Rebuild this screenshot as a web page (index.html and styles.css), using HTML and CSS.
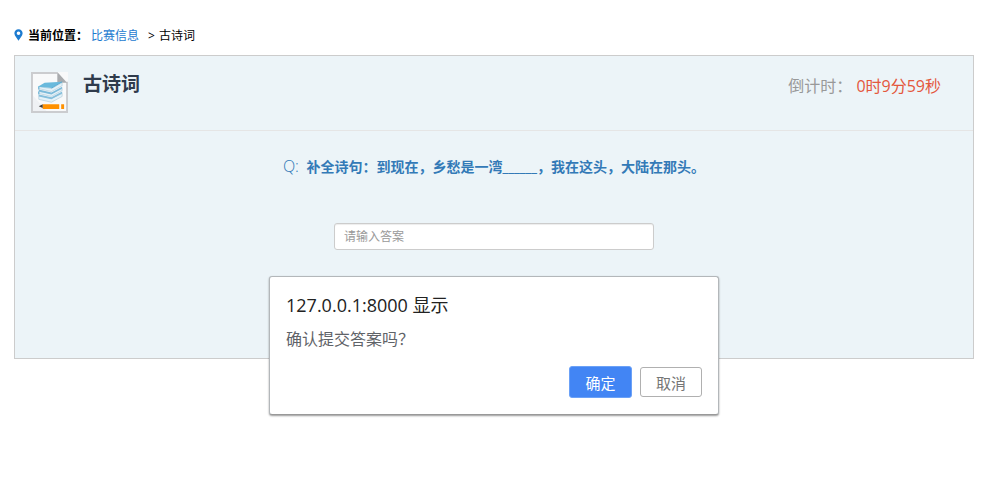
FILE: index.html
```html
<!DOCTYPE html>
<html lang="zh-CN">
  <head>
    <meta charset="UTF-8" />
    <meta name="viewport" content="width=device-width, initial-scale=1" />
    <title>古诗词</title>
    <link rel="stylesheet" href="styles.css">
  </head>
  <body>
    <div class="page">
      <!-- 当前位置 -->
      <nav class="location">
        <svg class="location-icon" viewBox="0 0 10 14" aria-hidden="true">
          <path fill="#1c7bd0" fill-rule="evenodd" d="M5 0.500C2.300 0.500 0.400 2.500 0.400 5c0 3 3.200 5.400 4.600 8.500C6.400 10.400 9.600 8 9.600 5 9.600 2.500 7.700 0.500 5 0.500zM5 3a2 2 0 1 1 0 4 2 2 0 0 1 0-4z" />
        </svg>
        <strong>当前位置：</strong>
        <a href="#">比赛信息</a>
        <span class="location-sep">&gt;</span>
        <span>古诗词</span>
      </nav>

      <main class="panel">
        <header class="panel-header">
          <svg class="panel-icon" viewBox="0 0 38 42" aria-hidden="true">
            <path fill="#f8f9fa" d="M0 0h38v42H0z" />
            <path fill="#eff1f4" d="M2 40V24l14 16z" />
            <path fill="none" stroke="#cbcccf" stroke-width="2" d="M27 1H1v40h36V10" />
            <path fill="#a9abae" d="M27 0l10 11H27z" />
            <!-- 书本 -->
            <path fill="#e4f2f9" stroke="#a9c6d6" stroke-width="0.600" d="M8 24l13 3 11-5v3l-11 6-13-3z" />
            <path fill="#86bfdc" d="M8 23l13 3 11-6v2l-11 6-13-3z" />
            <path fill="#e4f2f9" stroke="#a9c6d6" stroke-width="0.600" d="M8 20l13 2 11-5v2l-11 6-13-3z" />
            <path fill="#7bbada" d="M8 18l13 3 11-6v2l-11 6-13-3z" />
            <path fill="#e4f2f9" stroke="#a9c6d6" stroke-width="0.600" d="M8 15l13 2 11-6v3l-11 6-13-3z" />
            <path fill="#69b9dc" d="M7 15l7-4 18-1-11 6.500z" />
            <path fill="none" stroke="#4ba5d0" stroke-width="0.900" d="M8 15v3M8 20v3M21 16.500l11-6.500" />
            <!-- 铅笔 -->
            <path fill="#ff9100" d="M12 33h17v5H12zM31 33h3v5h-3z" />
            <path fill="#3d3a35" d="M8 35l4-2v4z" />
          </svg>
          <h1>古诗词</h1>
          <p class="countdown">倒计时： <span>0时9分59秒</span></p>
        </header>

        <form class="question">
          <label for="answer">
            <span class="question-mark">Q:</span>
            <b>补全诗句：到现在，乡愁是一湾______，我在这头，大陆在那头。</b>
          </label>
          <input type="text" id="answer" name="answer" placeholder="请输入答案" />
        </form>
      </main>

      <!-- 提交确认框 -->
      <div class="dialog" role="dialog" aria-labelledby="dialog-title">
        <h2 id="dialog-title">127.0.0.1:8000 显示</h2>
        <p>确认提交答案吗？</p>
        <div class="dialog-buttons">
          <button type="button" class="btn btn-ok">确定</button>
          <button type="button" class="btn">取消</button>
        </div>
      </div>
    </div>
  </body>
</html>
```

FILE: styles.css
```css
* {
  box-sizing: border-box;
}

body {
  margin: 0;
  background: #fff;
  color: #000;
  font-family: "Open Sans", "Noto Sans CJK SC", sans-serif;
  font-size: 12px;
}

.page {
  position: relative;
  min-height: 100vh;
  margin: 0 33px 0 14px;
  padding-top: 25px;
}

/* 当前位置 */
.location {
  display: flex;
  align-items: center;
  height: 20px;
  margin-bottom: 10px;
}

.location-icon {
  width: 9px;
  height: 14px;
  margin-right: 5px;
}

.location a {
  margin: 0 9px 0 3px;
  color: #1c7bd0;
  text-decoration: none;
}

.location-sep {
  margin-right: 4px;
}

/* 答题面板 */
.panel {
  min-height: 304px;
  border: 1px solid #ccc;
  background: #ecf4f8;
}

.panel-header {
  display: flex;
  align-items: flex-start;
  height: 75px;
  padding: 16px 32px 0 16px;
  border-bottom: 1px solid #e5e5e5;
}

.panel-icon {
  width: 37px;
  height: 41px;
}

.panel-header h1 {
  margin: 0 0 0 15px;
  color: #2f3b4c;
  font-size: 19px;
  font-weight: 700;
  line-height: 24px;
}

.countdown {
  margin: 0 0 0 auto;
  color: #999;
  font-size: 16px;
  line-height: 28px;
}

.countdown span {
  color: #e4573d;
}

.question {
  display: flex;
  flex-direction: column;
  align-items: center;
  padding: 23px 16px;
}

.question label {
  color: #337ab7;
  font-size: 14px;
  line-height: 24px;
}

.question-mark {
  margin-right: 4px;
  font-size: 16px;
  font-weight: 300;
}

.question input {
  width: 320px;
  max-width: 100%;
  height: 27px;
  margin-top: 44px;
  padding: 0 9px;
  border: 1px solid #ccc;
  border-radius: 3px;
  background: #fff;
  box-shadow: inset 0 1px 1px rgba(0, 0, 0, 0.075);
  font-family: inherit;
  font-size: 12px;
}

.question input::placeholder {
  color: #999;
}

/* 确认框 */
.dialog {
  position: absolute;
  top: 276px;
  left: 50%;
  width: 450px;
  max-width: 100%;
  padding: 16px;
  transform: translateX(-50%);
  border: 1px solid #b3b7ba;
  border-bottom-color: #999;
  border-radius: 3px;
  background: #fff;
  box-shadow: 0 1px 2px rgba(0, 0, 0, 0.4);
}

.dialog h2 {
  margin: 0;
  color: #222;
  font-size: 18px;
  font-weight: 400;
  line-height: 24px;
}

.dialog p {
  margin: 10px 0 15px;
  color: #5f6368;
  font-size: 16px;
  line-height: 24px;
}

.dialog-buttons {
  display: flex;
  justify-content: flex-end;
  align-items: center;
  gap: 8px;
}

.btn {
  width: 62px;
  height: 30px;
  padding: 0;
  border: 1px solid #b0b0b0;
  border-radius: 3px;
  background: #fff;
  color: #757575;
  font-family: inherit;
  font-size: 15px;
}

.btn-ok {
  width: 63px;
  height: 32px;
  border-color: #6ba1f7;
  background: #4285f4;
  color: #fff;
}
```
